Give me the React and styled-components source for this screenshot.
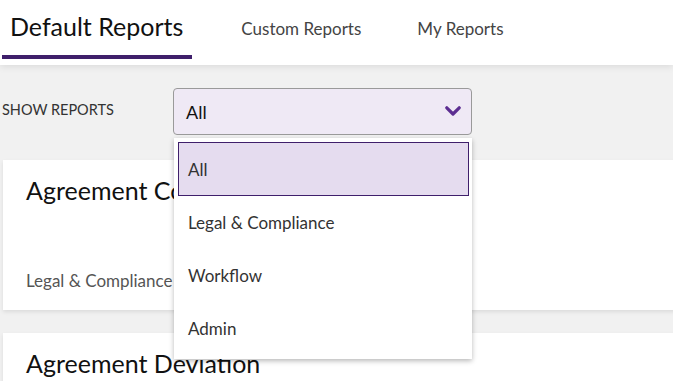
import React from 'react';
import styled, { createGlobalStyle } from 'styled-components';

const GlobalStyle = createGlobalStyle`
  html, body {
    margin: 0;
    padding: 0;
    background: #f1f1f1;
    font-family: Lato, "Liberation Sans", sans-serif;
    overflow: hidden;
  }
`;

const Page = styled.div`
  width: 673px;
  height: 381px;
  position: relative;
  overflow: hidden;
`;

const Header = styled.div`
  height: 65px;
  background: #fff;
  display: flex;
  align-items: stretch;
  padding-left: 2px;
  box-shadow: 0 2px 7px rgba(0, 0, 0, 0.09);
  position: relative;
  z-index: 1;
`;

const Tab = styled.div`
  display: flex;
  align-items: center;
  box-sizing: border-box;
  height: 59px;
  padding: ${p => (p.$active ? '0 9px 4px 8px' : '2px 28px 0')};
  font-size: ${p => (p.$active ? '25px' : '17px')};
  color: ${p => (p.$active ? '#111' : '#444')};
  border-bottom: 4px solid ${p => (p.$active ? '#3f1f6b' : 'transparent')};
`;

const TabSpacer = styled.div`
  width: 21px;
`;

const FilterRow = styled.div`
  display: flex;
  align-items: center;
  padding: 23px 0 0 2px;
  position: relative;
`;

const Label = styled.div`
  width: 171px;
  font-size: 14.5px;
  color: #333;
  text-transform: uppercase;
  padding-bottom: 4px;
`;

const Select = styled.div`
  width: 299px;
  height: 47px;
  box-sizing: border-box;
  border: 1px solid #9a9a9a;
  border-radius: 4px;
  background: #efe9f5;
  display: flex;
  align-items: center;
  justify-content: space-between;
  padding: 0 10px 0 12px;
  font-size: 18px;
  color: #111;
  position: relative;
`;

const Menu = styled.div`
  position: absolute;
  top: 49px;
  left: 0px;
  width: 298px;
  box-sizing: border-box;
  padding: 4px 3px 4px 4px;
  background: #fff;
  box-shadow: 0 2px 5px rgba(0, 0, 0, 0.28);
  z-index: 5;
`;

const MenuItem = styled.div`
  box-sizing: border-box;
  display: flex;
  align-items: center;
  padding-left: ${p => (p.$selected ? '9px' : '10px')};
  font-size: 17px;
  color: #333;
  background: ${p => (p.$selected ? '#e5dcef' : 'transparent')};
  border: ${p => (p.$selected ? '1px solid #3f1f6b' : 'none')};
  height: ${p => (p.$selected ? '54px' : '53px')};
`;

const Cards = styled.div`
  display: flex;
  flex-direction: column;
  gap: 23px;
  padding: 25px 0 0 3px;
`;

const Card = styled.div`
  background: #fff;
  height: 150px;
  width: 700px;
  box-sizing: border-box;
  padding: 15px 23px;
  display: flex;
  flex-direction: column;
  justify-content: space-between;
  box-shadow: 0 2px 4px rgba(0, 0, 0, 0.09);
`;

const CardTitle = styled.div`
  font-size: 25px;
  color: #111;
`;

const CardTag = styled.div`
  font-size: 17px;
  color: #555;
  padding-bottom: 4px;
`;

const Chevron = () => (
  <svg width="16" height="11" viewBox="0 0 16 11">
    <path d="M1.8 1.8 L8 8 L14.2 1.8" fill="none" stroke="#5c2d91" strokeWidth="3.2" strokeLinecap="round" strokeLinejoin="round" />
  </svg>
);

const options = ['All', 'Legal & Compliance', 'Workflow', 'Admin'];

const App = () => {
  return (
    <Page>
      <GlobalStyle />
      <Header>
        <Tab $active>Default Reports</Tab>
        <TabSpacer />
        <Tab>Custom Reports</Tab>
        <Tab>My Reports</Tab>
      </Header>
      <FilterRow>
        <Label>Show Reports</Label>
        <Select>
          <span>All</span>
          <Chevron />
          <Menu>
            {options.map(o => (
              <MenuItem key={o} $selected={o === 'All'}>{o}</MenuItem>
            ))}
          </Menu>
        </Select>
      </FilterRow>
      <Cards>
        <Card>
          <CardTitle>Agreement Compliance Summary</CardTitle>
          <CardTag>Legal &amp; Compliance</CardTag>
        </Card>
        <Card>
          <CardTitle>Agreement Deviation</CardTitle>
          <CardTag>Legal &amp; Compliance</CardTag>
        </Card>
      </Cards>
    </Page>
  );
};

export default App;
